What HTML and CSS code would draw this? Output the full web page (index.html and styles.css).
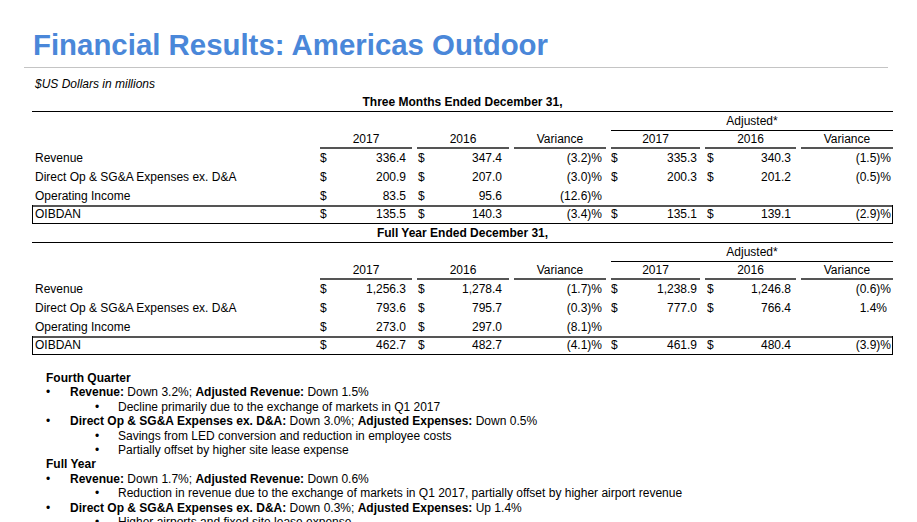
FILE: index.html
```html
<!DOCTYPE html>
<html>
<head>
<meta charset="utf-8">
<title>Financial Results: Americas Outdoor</title>
<link rel="stylesheet" href="styles.css">
</head>
<body>
<h1 class="title">Financial Results: Americas Outdoor</h1>
<div class="rule"></div>
<p class="units">$US Dollars in millions</p>

<div class="fin">
  <div class="cap">Three Months Ended December 31,</div>
  <div class="row adj"><span class="adj-label">Adjusted*</span></div>
  <div class="row hdr">
    <span></span><span class="h">2017</span><span class="h">2016</span><span class="h">Variance</span><span class="h">2017</span><span class="h">2016</span><span class="h">Variance</span>
  </div>
  <div class="row">
    <span class="lbl">Revenue</span>
    <span class="m ca"><span>$</span><span>336.4</span></span>
    <span class="m cb"><span>$</span><span>347.4</span></span>
    <span class="pct cc">(3.2)%</span>
    <span class="m cd"><span>$</span><span>335.3</span></span>
    <span class="m ce"><span>$</span><span>340.3</span></span>
    <span class="pct cf">(1.5)%</span>
  </div>
  <div class="row">
    <span class="lbl">Direct Op &amp; SG&amp;A Expenses ex. D&amp;A</span>
    <span class="m ca"><span>$</span><span>200.9</span></span>
    <span class="m cb"><span>$</span><span>207.0</span></span>
    <span class="pct cc">(3.0)%</span>
    <span class="m cd"><span>$</span><span>200.3</span></span>
    <span class="m ce"><span>$</span><span>201.2</span></span>
    <span class="pct cf">(0.5)%</span>
  </div>
  <div class="row short">
    <span class="lbl">Operating Income</span>
    <span class="m ca"><span>$</span><span>83.5</span></span>
    <span class="m cb"><span>$</span><span>95.6</span></span>
    <span class="pct cc">(12.6)%</span>
    <span></span><span></span><span></span>
  </div>
  <div class="row boxed">
    <span class="lbl">OIBDAN</span>
    <span class="m ca"><span>$</span><span>135.5</span></span>
    <span class="m cb"><span>$</span><span>140.3</span></span>
    <span class="pct cc">(3.4)%</span>
    <span class="m cd"><span>$</span><span>135.1</span></span>
    <span class="m ce"><span>$</span><span>139.1</span></span>
    <span class="pct cf">(2.9)%</span>
  </div>

  <div class="cap">Full Year Ended December 31,</div>
  <div class="row adj"><span class="adj-label">Adjusted*</span></div>
  <div class="row hdr">
    <span></span><span class="h">2017</span><span class="h">2016</span><span class="h">Variance</span><span class="h">2017</span><span class="h">2016</span><span class="h">Variance</span>
  </div>
  <div class="row">
    <span class="lbl">Revenue</span>
    <span class="m ca"><span>$</span><span>1,256.3</span></span>
    <span class="m cb"><span>$</span><span>1,278.4</span></span>
    <span class="pct cc">(1.7)%</span>
    <span class="m cd"><span>$</span><span>1,238.9</span></span>
    <span class="m ce"><span>$</span><span>1,246.8</span></span>
    <span class="pct cf">(0.6)%</span>
  </div>
  <div class="row">
    <span class="lbl">Direct Op &amp; SG&amp;A Expenses ex. D&amp;A</span>
    <span class="m ca"><span>$</span><span>793.6</span></span>
    <span class="m cb"><span>$</span><span>795.7</span></span>
    <span class="pct cc">(0.3)%</span>
    <span class="m cd"><span>$</span><span>777.0</span></span>
    <span class="m ce"><span>$</span><span>766.4</span></span>
    <span class="pct cf pos">1.4%</span>
  </div>
  <div class="row short">
    <span class="lbl">Operating Income</span>
    <span class="m ca"><span>$</span><span>273.0</span></span>
    <span class="m cb"><span>$</span><span>297.0</span></span>
    <span class="pct cc">(8.1)%</span>
    <span></span><span></span><span></span>
  </div>
  <div class="row boxed">
    <span class="lbl">OIBDAN</span>
    <span class="m ca"><span>$</span><span>462.7</span></span>
    <span class="m cb"><span>$</span><span>482.7</span></span>
    <span class="pct cc">(4.1)%</span>
    <span class="m cd"><span>$</span><span>461.9</span></span>
    <span class="m ce"><span>$</span><span>480.4</span></span>
    <span class="pct cf">(3.9)%</span>
  </div>
</div>

<div class="notes">
  <div class="head">Fourth Quarter</div>
  <div class="l1"><span class="dot">•</span><span><b>Revenue:</b> Down 3.2%; <b>Adjusted Revenue:</b> Down 1.5%</span></div>
  <div class="l2"><span class="dot">•</span><span>Decline primarily due to the exchange of markets in Q1 2017</span></div>
  <div class="l1"><span class="dot">•</span><span><b>Direct Op &amp; SG&amp;A Expenses ex. D&amp;A:</b> Down 3.0%; <b>Adjusted Expenses:</b> Down 0.5%</span></div>
  <div class="l2"><span class="dot">•</span><span>Savings from LED conversion and reduction in employee costs</span></div>
  <div class="l2"><span class="dot">•</span><span>Partially offset by higher site lease expense</span></div>
  <div class="head">Full Year</div>
  <div class="l1"><span class="dot">•</span><span><b>Revenue:</b> Down 1.7%; <b>Adjusted Revenue:</b> Down 0.6%</span></div>
  <div class="l2"><span class="dot">•</span><span>Reduction in revenue due to the exchange of markets in Q1 2017, partially offset by higher airport revenue</span></div>
  <div class="l1"><span class="dot">•</span><span><b>Direct Op &amp; SG&amp;A Expenses ex. D&amp;A:</b> Down 0.3%; <b>Adjusted Expenses:</b> Up 1.4%</span></div>
  <div class="l2"><span class="dot">•</span><span>Higher airports and fixed site lease expense</span></div>
</div>
</body>
</html>
```

FILE: styles.css
```css
* { box-sizing: border-box; }

html, body {
  margin: 0;
  padding: 0;
  overflow: hidden;
  background: #ffffff;
}

body {
  font-family: "Liberation Sans", Arial, sans-serif;
  font-size: 12px;
  color: #000000;
}

.title {
  margin: 0;
  padding: 28px 0 0 33px;
  font-size: 29.4px;
  line-height: 34px;
  font-weight: bold;
  color: #4a87d9;
  white-space: nowrap;
}

.rule {
  margin: 5px 0 0 24px;
  width: 864px;
  height: 1px;
  background: #c4c4c4;
}

.units {
  margin: 9px 0 0 35px;
  font-style: italic;
  line-height: 14px;
}

.fin {
  margin: 2px 0 0 32px;
  width: 861px;
}

.cap {
  height: 19px;
  line-height: 18px;
  text-align: center;
  font-weight: bold;
  border-bottom: 1px solid #000000;
}

.row {
  display: grid;
  grid-template-columns: 283px 92px 92px 92px 89px 91px 92px;
  column-gap: 5px;
  height: 19px;
  line-height: 19px;
  white-space: nowrap;
}

.row.short {
  height: 18px;
  line-height: 18px;
}

.adj .adj-label {
  grid-column: 5 / 8;
  height: 19px;
  line-height: 18px;
  text-align: center;
  border-bottom: 1px solid #000000;
}

.row.hdr {
  height: 18px;
}

.hdr .h {
  height: 18px;
  line-height: 16px;
  text-align: center;
  border-bottom: 2px solid #555555;
}

.boxed {
  box-shadow: inset 1px 0 0 #000000, inset -1px 0 0 #000000, inset 0 -1px 0 #000000, inset 0 2px 0 #555555;
}

.lbl {
  padding-left: 3px;
}

.m {
  display: flex;
  justify-content: space-between;
}

.pct {
  text-align: right;
}

.ca { padding-right: 6px; }
.cb { padding-left: 1px; padding-right: 7px; }
.cc { padding-right: 4px; }
.cd { padding-right: 3px; }
.ce { padding-left: 2px; padding-right: 5px; }
.cf { padding-right: 2px; }
.cf.pos { padding-right: 6px; }

.notes {
  margin-top: 16px;
  padding-left: 46px;
  line-height: 14.4px;
  white-space: nowrap;
}

.notes .head {
  font-weight: bold;
}

.notes b {
  font-weight: bold;
}

.l1 {
  display: flex;
}

.l1 .dot {
  flex: none;
  width: 24px;
}

.l2 {
  display: flex;
  padding-left: 49px;
}

.l2 .dot {
  flex: none;
  width: 23px;
}
```
